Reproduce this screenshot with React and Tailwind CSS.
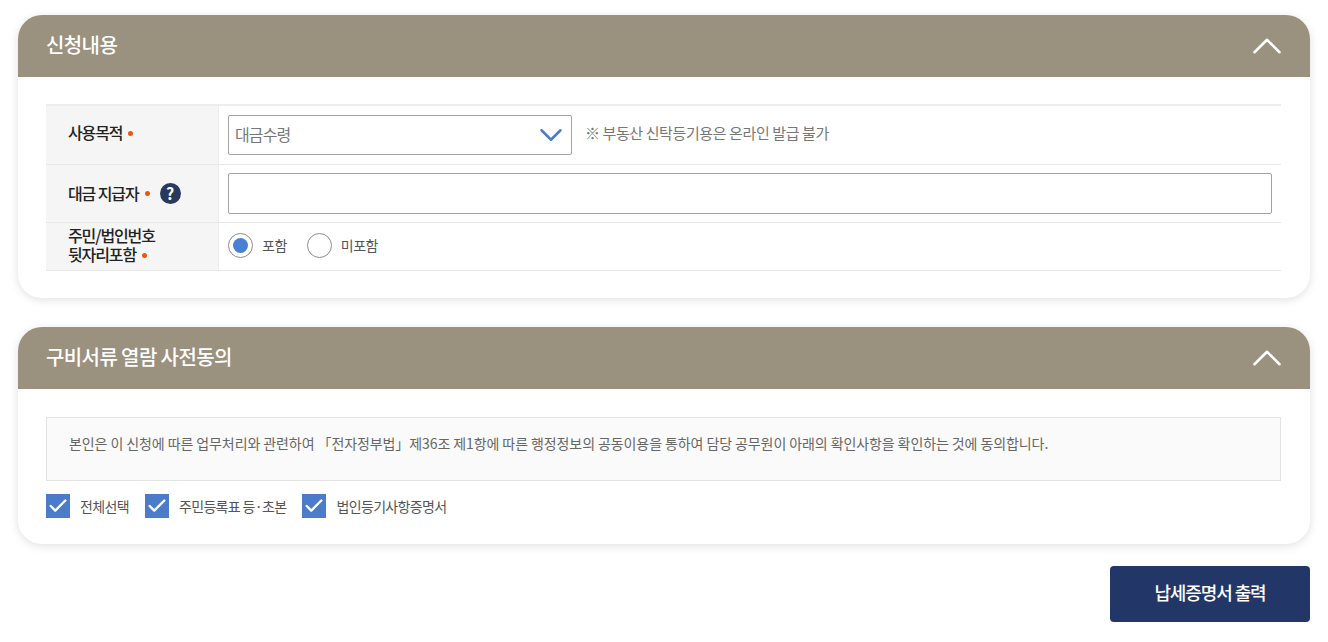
import { ChevronDown, ChevronUp, Check } from 'lucide-react';

const font = { kr: "font-['Noto_Sans_CJK_KR','Noto_Sans',sans-serif]" };

const Dot = () => <span className="ml-[6px] inline-block h-[5px] w-[5px] rounded-full bg-[#e8590c] align-[3px]" />;

const CardHeader = ({ title }) => (
  <div className="flex h-[62px] items-center justify-between rounded-t-[24px] bg-[#9a917f] px-[28px]">
    <h2 className="pb-[2px] text-[20px] font-medium leading-none tracking-[-0.6px] text-white">{title}</h2>
    <ChevronUp size={50} strokeWidth={1.2} className="mr-[-10px] text-white" />
  </div>
);

const Row = ({ label, children, className, labelClass }) => (
  <div className={`flex border-b border-[#e8e8e8] ${className}`}>
    <div className={`flex w-[173px] shrink-0 items-center border-r border-[#eeeeee] bg-[#f5f5f5] pl-[22px] text-[16px] font-medium leading-[19px] tracking-[-1.1px] text-[#222222] ${labelClass}`}>
      {label}
    </div>
    <div className="flex flex-1 items-center px-[9px]">{children}</div>
  </div>
);

const Radio = ({ label, checked }) => (
  <label className="flex items-center">
    <span className="flex h-[25px] w-[25px] items-center justify-center rounded-full border border-[#8c8c8c] bg-white">
      {checked && <span className="h-[15px] w-[15px] rounded-full bg-[#4a7fd6]" />}
    </span>
    <span className="ml-[9px] text-[14px] tracking-[-0.5px] text-[#555555]">{label}</span>
  </label>
);

const Agree = ({ label }) => (
  <label className="flex items-center">
    <span className="flex h-[24px] w-[24px] items-center justify-center bg-[#4a7cc9]">
      <Check size={22} strokeWidth={2.6} className="text-white" />
    </span>
    <span className="ml-[10px] text-[14px] tracking-[-0.65px] text-[#555555]">{label}</span>
  </label>
);

export default function App() {
  return (
    <div className={`min-h-[642px] bg-white px-[18px] pt-[15px] ${font.kr}`}>
      <section className="h-[283px] rounded-[24px] bg-white shadow-[0_2px_10px_rgba(0,0,0,0.12)]">
        <CardHeader title="신청내용" />
        <div className="px-[28px] pt-[27px]">
          <div className="mr-[1px] border-t-2 border-[#eeeeee]">
            <Row className="h-[59px]" labelClass="pb-[6px]" label={<span>사용목적<Dot /></span>}>
              <div className="mb-[1px] flex h-[40px] w-[344px] items-center justify-between rounded-[2px] border border-[#a3a3a3] bg-white pl-[6px] pr-[1px] text-[16px] tracking-[-0.9px] text-[#777777]">
                <span className="pb-[2px]">대금수령</span>
                <ChevronDown size={38} strokeWidth={1.6} className="text-[#4a7cc9]" />
              </div>
              <span className="mb-[3px] ml-[13px] text-[15px] tracking-[-0.4px] text-[#777777]">※ 부동산 신탁등기용은 온라인 발급 불가</span>
            </Row>
            <Row className="h-[58px]" label={
              <span className="flex items-center">
                대금 지급자<Dot />
                <span className="ml-[10px] flex h-[21px] w-[21px] items-center justify-center rounded-full bg-[#28395c] text-[16px] font-bold tracking-normal text-white">?</span>
              </span>
            }>
              <div className="h-[41px] w-full rounded-[2px] border border-[#a3a3a3] bg-white" />
            </Row>
            <Row className="h-[48px]" labelClass="pb-[4px]" label={<span>주민/법인번호<br />뒷자리포함<Dot /></span>}>
              <div className="mb-[2px] flex gap-[20px]">
                <Radio label="포함" checked />
                <Radio label="미포함" />
              </div>
            </Row>
          </div>
        </div>
      </section>

      <section className="mt-[29px] h-[217px] rounded-[24px] bg-white shadow-[0_2px_10px_rgba(0,0,0,0.12)]">
        <CardHeader title="구비서류 열람 사전동의" />
        <div className="px-[28px] pt-[28px]">
          <div className="mr-[1px] flex h-[64px] items-start border border-[#e3e3e3] bg-[#fafafa] pl-[22px] pt-[15px] text-[14px] tracking-[-0.09px] text-[#666666]">
            본인은 이 신청에 따른 업무처리와 관련하여 「전자정부법」제36조 제1항에 따른 행정정보의 공동이용을 통하여 담당 공무원이 아래의 확인사항을 확인하는 것에 동의합니다.
          </div>
          <div className="mt-[13px] flex gap-[16px]">
            <Agree label="전체선택" />
            <Agree label="주민등록표 등·초본" />
            <Agree label="법인등기사항증명서" />
          </div>
        </div>
      </section>

      <div className="mt-[22px] flex justify-end">
        <button className="h-[56px] w-[200px] rounded-[4px] bg-[#223668] pb-[4px] text-[18px] font-medium tracking-[-1.1px] text-white">
          납세증명서 출력
        </button>
      </div>
    </div>
  );
}
